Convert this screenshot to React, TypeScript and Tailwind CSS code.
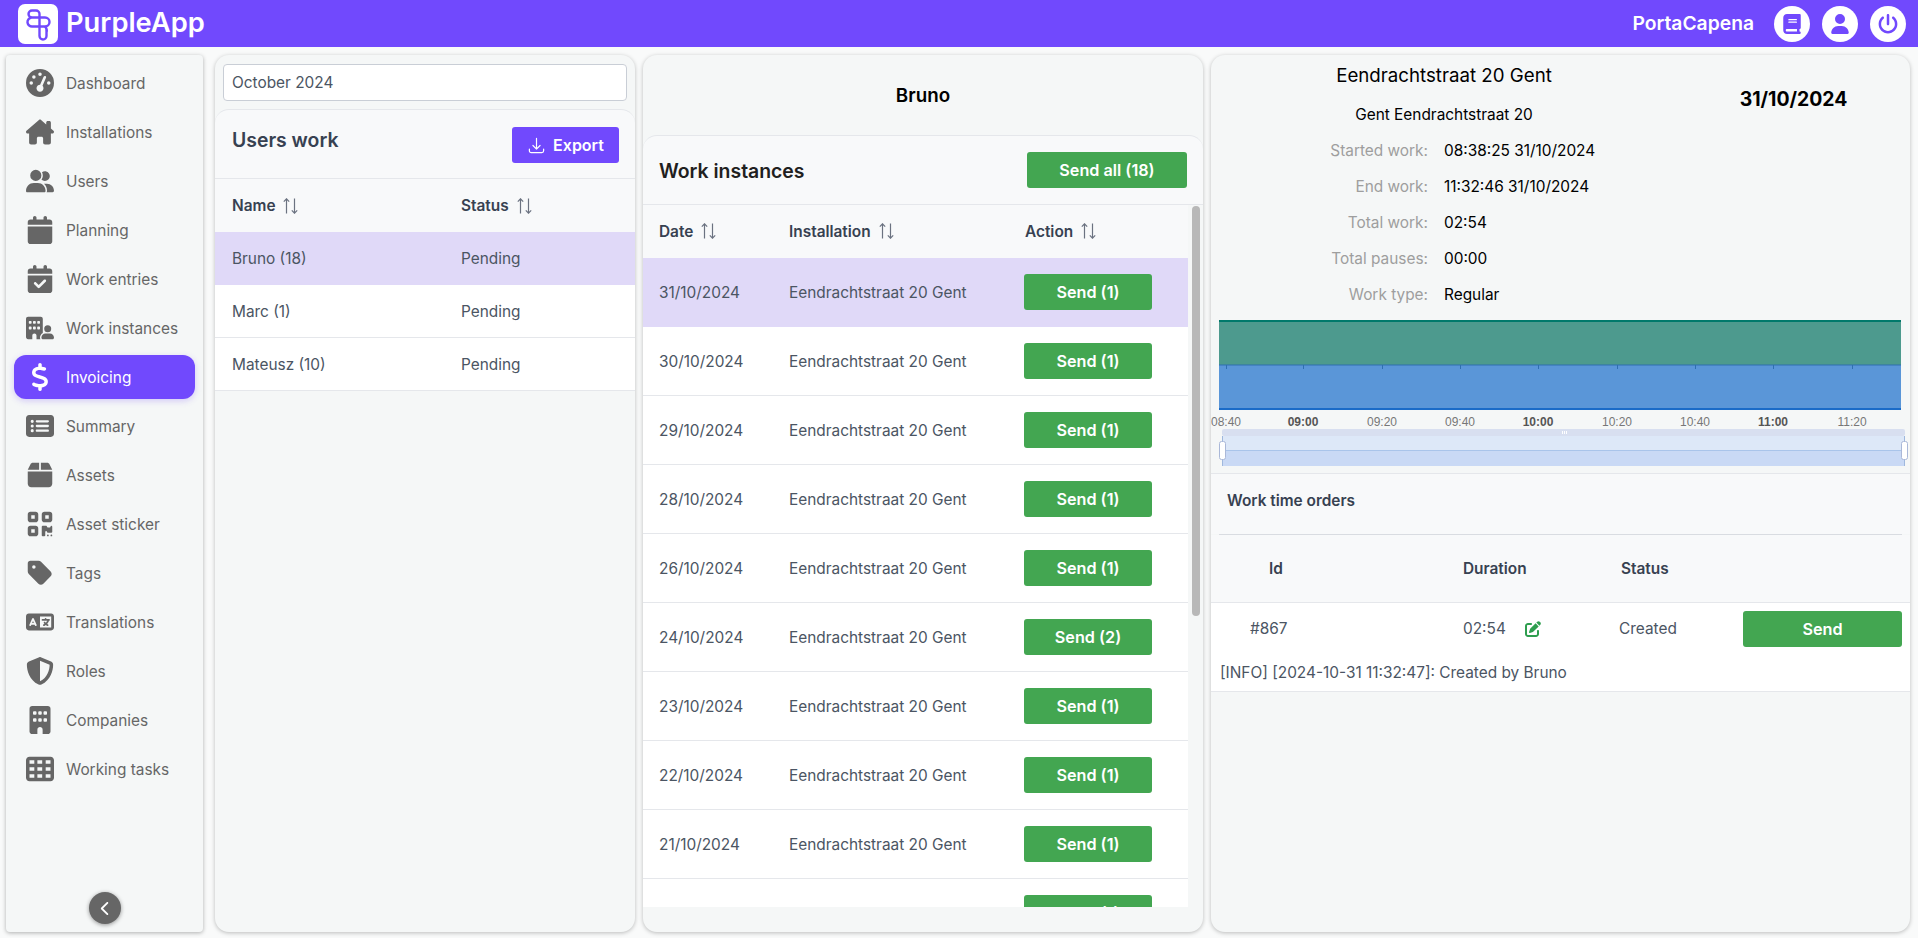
import React from "react";
import {
  FaBook,
  FaBox,
  FaBuilding,
  FaBuildingUser,
  FaCalendar,
  FaCalendarCheck,
  FaChevronLeft,
  FaDollarSign,
  FaGaugeHigh,
  FaHouseChimney,
  FaLanguage,
  FaPenToSquare,
  FaPowerOff,
  FaQrcode,
  FaRectangleList,
  FaShieldHalved,
  FaTableCells,
  FaTag,
  FaUser,
  FaUserGroup,
} from "react-icons/fa6";
import { HiOutlineArrowDownTray } from "react-icons/hi2";

const navItems = [
  { label: "Dashboard", icon: FaGaugeHigh },
  { label: "Installations", icon: FaHouseChimney },
  { label: "Users", icon: FaUserGroup },
  { label: "Planning", icon: FaCalendar },
  { label: "Work entries", icon: FaCalendarCheck },
  { label: "Work instances", icon: FaBuildingUser },
  { label: "Invoicing", icon: FaDollarSign, active: true },
  { label: "Summary", icon: FaRectangleList },
  { label: "Assets", icon: FaBox },
  { label: "Asset sticker", icon: FaQrcode },
  { label: "Tags", icon: FaTag },
  { label: "Translations", icon: FaLanguage },
  { label: "Roles", icon: FaShieldHalved },
  { label: "Companies", icon: FaBuilding },
  { label: "Working tasks", icon: FaTableCells },
];

const users = [
  { name: "Bruno (18)", selected: true },
  { name: "Marc (1)" },
  { name: "Mateusz (10)" },
];

const instances = [
  { date: "31/10/2024", count: 1, selected: true },
  { date: "30/10/2024", count: 1 },
  { date: "29/10/2024", count: 1 },
  { date: "28/10/2024", count: 1 },
  { date: "26/10/2024", count: 1 },
  { date: "24/10/2024", count: 2 },
  { date: "23/10/2024", count: 1 },
  { date: "22/10/2024", count: 1 },
  { date: "21/10/2024", count: 1 },
  { date: "18/10/2024", count: 1 },
];

const details = [
  ["Started work:", "08:38:25 31/10/2024"],
  ["End work:", "11:32:46 31/10/2024"],
  ["Total work:", "02:54"],
  ["Total pauses:", "00:00"],
  ["Work type:", "Regular"],
];

const ticks = [
  { x: 15, label: "08:40" },
  { x: 92, label: "09:00", bold: true },
  { x: 171, label: "09:20" },
  { x: 249, label: "09:40" },
  { x: 327, label: "10:00", bold: true },
  { x: 406, label: "10:20" },
  { x: 484, label: "10:40" },
  { x: 562, label: "11:00", bold: true },
  { x: 641, label: "11:20" },
];

function SortIcon() {
  return (
    <svg width="15" height="16" viewBox="0 0 15 16" fill="none" stroke="#6b7280" strokeWidth="1.2" className="ml-[8px] shrink-0">
      <path d="M3.5 15.5V1M0.8 3.6 3.5 0.8 6.2 3.6" />
      <path d="M11.5 0.5V15M8.8 12.4 11.5 15.2 14.2 12.4" />
    </svg>
  );
}

function Logo() {
  return (
    <div className="w-[40px] h-[40px] bg-white rounded-[7px]">
      <svg width="40" height="40" viewBox="0 0 40 40" fill="none" stroke="#7149fd" strokeWidth="2.4">
        <path d="M21.5 22.5V10a3.5 3.5 0 0 0-3.5-3.5h-4a3.5 3.5 0 0 0 0 7h13a4.5 4.5 0 0 1 0 9H14.5a4.5 4.5 0 0 1-1-9" />
        <path d="M21.5 22.5V32a3.5 3.5 0 0 0 7 0v-3.5a6 6 0 0 0-1.5-6" />
      </svg>
    </div>
  );
}

function Header() {
  return (
    <header className="h-[47px] shrink-0 bg-[#7149fd] flex items-center pl-[18px] pr-[12px] text-white">
      <Logo />
      <span className="ml-[8px] text-[27.3px] font-semibold">PurpleApp</span>
      <span className="ml-auto text-[19.3px] font-semibold">PortaCapena</span>
      <div className="ml-[20px] flex items-center gap-[12px]">
        <button className="w-[36px] h-[36px] rounded-full bg-white text-[#7149fd] flex items-center justify-center"><FaBook size={20} /></button>
        <button className="w-[36px] h-[36px] rounded-full bg-white text-[#7149fd] flex items-center justify-center"><FaUser size={20} /></button>
        <button className="w-[36px] h-[36px] rounded-full bg-white text-[#7149fd] flex items-center justify-center"><FaPowerOff size={20} /></button>
      </div>
    </header>
  );
}

function Sidebar() {
  return (
    <aside className="w-[197px] shrink-0 mr-[4px] bg-[#f5f7f7] rounded-[4px] shadow-[0_1px_4px_rgba(0,0,0,0.3)] flex flex-col relative pt-[3px] px-[8px]">
      {navItems.map((item) => {
        const Icon = item.icon;
        return (
          <div
            key={item.label}
            className={
              item.active
                ? "h-[44px] my-[2.5px] rounded-[12px] bg-[#7149fd] text-white flex items-center shadow-[0_2px_6px_rgba(113,73,253,0.25)]"
                : "h-[44px] my-[2.5px] text-[#666666] flex items-center"
            }
          >
            <span className="w-[52px] flex justify-center shrink-0 pt-[1px]"><Icon size={28} /></span>
            <span className="text-[15.4px] pt-[2px]">{item.label}</span>
          </div>
        );
      })}
      <button className="absolute bottom-[8px] left-[83px] w-[32px] h-[32px] rounded-full bg-[#666666] text-white flex items-center justify-center shadow-[0_1px_4px_rgba(0,0,0,0.4)]">
        <FaChevronLeft size={15} />
      </button>
    </aside>
  );
}

function UsersPanel() {
  return (
    <section className="w-[420px] shrink-0 bg-[#f5f7f7] rounded-[14px] shadow-[0_1px_4px_rgba(0,0,0,0.25)] flex flex-col overflow-hidden">
      <div className="px-[8px] pt-[9px]">
        <div className="h-[37px] bg-white border border-[#c9ced6] rounded-[4px] flex items-center px-[8px] pt-[1px] text-[15.4px] text-[#4b5563]">October 2024</div>
      </div>
      <div className="mt-[8px] h-[70px] bg-[#f8f9fa] border-t border-[#e5e7eb] rounded-t-[14px] flex items-start justify-between pl-[17px] pr-[16px] border-b">
        <span className="mt-[16px] text-[19.4px] font-semibold text-[#374151]">Users work</span>
        <button className="mt-[17px] w-[107px] h-[36px] bg-[#7149fd] rounded-[3px] text-white font-semibold text-[16px] flex items-center justify-center gap-[7px]">
          <HiOutlineArrowDownTray size={19} />
          Export
        </button>
      </div>
      <div className="h-[53px] bg-[#f8f9fa] grid grid-cols-[229px_1fr] items-center pl-[17px] pt-[1px] text-[15.4px] font-semibold text-[#374151]">
        <span className="flex items-center">Name<SortIcon /></span>
        <span className="flex items-center">Status<SortIcon /></span>
      </div>
      {users.map((user) => (
        <div
          key={user.name}
          className={`h-[53px] grid grid-cols-[229px_1fr] items-center pl-[17px] pt-[1px] text-[15.4px] text-[#4b5563] border-b ${user.selected ? "bg-[#e0d9f8] border-[#e0d9f8]" : "bg-white border-[#e5e7eb]"}`}
        >
          <span>{user.name}</span>
          <span>Pending</span>
        </div>
      ))}
    </section>
  );
}

function InstancesPanel() {
  return (
    <section className="w-[560px] shrink-0 bg-[#f5f7f7] rounded-[14px] shadow-[0_1px_4px_rgba(0,0,0,0.25)] flex flex-col overflow-hidden">
      <div className="h-[80px] shrink-0 flex items-center justify-center pt-[3px] text-[18.8px] font-semibold text-black">Bruno</div>
      <div className="h-[70px] shrink-0 bg-[#f8f9fa] border-y border-[#e5e7eb] rounded-t-[14px] flex items-center justify-between pl-[16px] pr-[16px]">
        <span className="pt-[4px] text-[19.4px] font-semibold text-[#1f2020]">Work instances</span>
        <button className="w-[160px] h-[36px] bg-[#43a651] rounded-[3px] text-white font-semibold text-[16.2px]">Send all (18)</button>
      </div>
      <div className="h-[702px] flex overflow-hidden">
        <div className="w-[545px] overflow-hidden">
          <div className="h-[53px] bg-[#f8f9fa] grid grid-cols-[130px_236px_1fr] items-center pl-[16px] text-[15.4px] font-semibold text-[#374151]">
            <span className="flex items-center">Date<SortIcon /></span>
            <span className="flex items-center">Installation<SortIcon /></span>
            <span className="flex items-center">Action<SortIcon /></span>
          </div>
          {instances.map((row) => (
            <div
              key={row.date}
              className={`h-[69px] grid grid-cols-[130px_235px_1fr] items-center pl-[16px] text-[15.4px] text-[#4b5563] border-b ${row.selected ? "bg-[#e0d9f8] border-[#e0d9f8]" : "bg-white border-[#e5e7eb]"}`}
            >
              <span className="pt-[1px]">{row.date}</span>
              <span className="pt-[1px]">Eendrachtstraat 20 Gent</span>
              <button className="w-[128px] h-[36px] bg-[#43a651] rounded-[3px] text-white font-semibold text-[16.2px]">Send ({row.count})</button>
            </div>
          ))}
        </div>
        <div className="flex-1 pl-[4px] pt-[1px]">
          <div className="w-[8px] h-[410px] rounded-full bg-[#b8b8b8]" />
        </div>
      </div>
    </section>
  );
}

function Timeline() {
  return (
    <svg width="699" height="153" viewBox="0 0 699 153" className="block shrink-0">
      <rect x="8" y="0" width="682" height="45" fill="#4d9a8e" />
      <rect x="8" y="0" width="682" height="2" fill="#00796b" />
      <rect x="8" y="45" width="682" height="45" fill="#5a96d8" />
      <rect x="8" y="44.5" width="682" height="1" fill="#2f6fb0" />
      <rect x="8" y="88" width="682" height="2" fill="#1a6bc8" />
      {ticks.map((t) => (
        <g key={t.label}>
          <rect x={t.x} y="45" width="1" height="4" fill="#2f6fb0" />
          <text
            x={t.x}
            y="106"
            textAnchor="middle"
            fontSize="12"
            fontFamily="'Liberation Sans', sans-serif"
            fontWeight={t.bold ? 700 : 400}
            fill={t.bold ? "#555555" : "#777777"}
          >
            {t.label}
          </text>
        </g>
      ))}
      <rect x="11" y="109" width="683" height="7" rx="2" fill="#d8dff0" />
      <rect x="11" y="116" width="683" height="14" fill="#dde8f8" />
      <rect x="11" y="130" width="683" height="16" fill="#c9d9f5" />
      <rect x="11" y="130" width="683" height="1" fill="#a9c4ea" />
      <rect x="11" y="116" width="1" height="30" fill="#9fb8dd" />
      <rect x="693" y="116" width="1" height="30" fill="#9fb8dd" />
      <rect x="8.5" y="121.5" width="6" height="18" rx="2" fill="#ffffff" stroke="#aab8d8" />
      <rect x="690.5" y="121.5" width="6" height="18" rx="2" fill="#ffffff" stroke="#aab8d8" />
      <path d="M351.5 111v3M353.5 111v3M355.5 111v3" stroke="#ffffff" strokeWidth="1" />
    </svg>
  );
}

function DetailPanel() {
  return (
    <section className="w-[699px] shrink-0 bg-[#f5f7f7] rounded-[14px] shadow-[0_1px_4px_rgba(0,0,0,0.25)] flex flex-col overflow-hidden">
      <div className="flex h-[265px] shrink-0 pb-[7px]">
        <div className="w-[466px]">
          <div className="h-[42px] pt-[1px] flex items-center justify-center text-[18.7px] text-black">Eendrachtstraat 20 Gent</div>
          <div className="h-[35px] flex items-center justify-center text-[15.4px] text-black">Gent Eendrachtstraat 20</div>
          {details.map(([label, value]) => (
            <div key={label} className="h-[36px] grid grid-cols-[217px_1fr] gap-x-[16px] items-center pt-[1px] text-[15.4px]">
              <span className="text-right text-[#9e9e9e]">{label}</span>
              <span className="text-black">{value}</span>
            </div>
          ))}
        </div>
        <div className="flex-1 pt-[30px] text-center text-[19.4px] font-bold text-black">31/10/2024</div>
      </div>
      <Timeline />
      <div className="h-[61px] shrink-0 bg-[#f8f9fa] border-t border-[#e5e7eb] flex items-center px-[16px] pb-[6px] text-[15.4px] font-semibold text-[#374151]">Work time orders</div>
      <div className="mx-[8px] border-t border-[#d9dce1]" />
      <div className="h-[68px] shrink-0 bg-[#f8f9fa] border-b border-[#e5e7eb] grid grid-cols-[252px_158px_1fr] items-center text-[15.4px] font-semibold text-[#374151]">
        <span className="pl-[58px]">Id</span>
        <span>Duration</span>
        <span>Status</span>
      </div>
      <div className="bg-white border-b border-[#e5e7eb] text-[15.4px] text-[#4b5563]">
        <div className="h-[52px] grid grid-cols-[252px_158px_1fr] items-center">
          <span className="pl-[39px]">#867</span>
          <span className="flex items-center">
            02:54
            <FaPenToSquare size={16} className="ml-[19px] text-[#2e9e4f]" />
          </span>
          <span className="flex items-center justify-between pr-[8px] -ml-[2px]">
            <span>Created</span>
            <button className="w-[159px] h-[36px] bg-[#43a651] rounded-[3px] text-white font-semibold text-[16.2px]">Send</button>
          </span>
        </div>
        <div className="h-[36px] pl-[9px] flex items-center">[INFO] [2024-10-31 11:32:47]: Created by Bruno</div>
      </div>
    </section>
  );
}

export default function App() {
  return (
    <div className="h-screen overflow-hidden flex flex-col bg-[#f9fafa] font-[Inter,sans-serif]">
      <Header />
      <main className="h-[885px] flex pt-[8px] pl-[6px] gap-[8px]">
        <Sidebar />
        <UsersPanel />
        <InstancesPanel />
        <DetailPanel />
      </main>
    </div>
  );
}
